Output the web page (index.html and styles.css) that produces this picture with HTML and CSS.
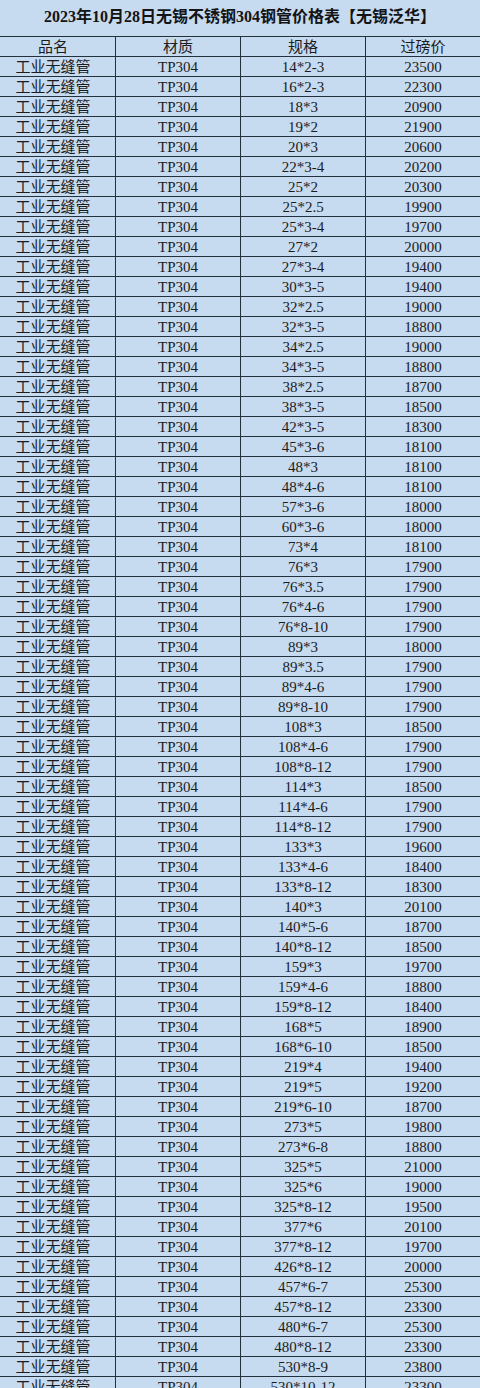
FILE: index.html
```html
<!DOCTYPE html>
<html lang="zh-CN">
<head>
<meta charset="utf-8">
<title>2023年10月28日无锡不锈钢304钢管价格表</title>
<link rel="stylesheet" href="styles.css">
</head>
<body>
<div class="sheet">
  <div class="title">2023年10月28日无锡不锈钢304钢管价格表【无锡泛华】</div>
  <div class="row head"><div class="c c1">品名</div><div class="c">材质</div><div class="c">规格</div><div class="c">过磅价</div></div>
  <div class="row"><div class="c c1">工业无缝管</div><div class="c">TP304</div><div class="c">14*2-3</div><div class="c">23500</div></div>
  <div class="row"><div class="c c1">工业无缝管</div><div class="c">TP304</div><div class="c">16*2-3</div><div class="c">22300</div></div>
  <div class="row"><div class="c c1">工业无缝管</div><div class="c">TP304</div><div class="c">18*3</div><div class="c">20900</div></div>
  <div class="row"><div class="c c1">工业无缝管</div><div class="c">TP304</div><div class="c">19*2</div><div class="c">21900</div></div>
  <div class="row"><div class="c c1">工业无缝管</div><div class="c">TP304</div><div class="c">20*3</div><div class="c">20600</div></div>
  <div class="row"><div class="c c1">工业无缝管</div><div class="c">TP304</div><div class="c">22*3-4</div><div class="c">20200</div></div>
  <div class="row"><div class="c c1">工业无缝管</div><div class="c">TP304</div><div class="c">25*2</div><div class="c">20300</div></div>
  <div class="row"><div class="c c1">工业无缝管</div><div class="c">TP304</div><div class="c">25*2.5</div><div class="c">19900</div></div>
  <div class="row"><div class="c c1">工业无缝管</div><div class="c">TP304</div><div class="c">25*3-4</div><div class="c">19700</div></div>
  <div class="row"><div class="c c1">工业无缝管</div><div class="c">TP304</div><div class="c">27*2</div><div class="c">20000</div></div>
  <div class="row"><div class="c c1">工业无缝管</div><div class="c">TP304</div><div class="c">27*3-4</div><div class="c">19400</div></div>
  <div class="row"><div class="c c1">工业无缝管</div><div class="c">TP304</div><div class="c">30*3-5</div><div class="c">19400</div></div>
  <div class="row"><div class="c c1">工业无缝管</div><div class="c">TP304</div><div class="c">32*2.5</div><div class="c">19000</div></div>
  <div class="row"><div class="c c1">工业无缝管</div><div class="c">TP304</div><div class="c">32*3-5</div><div class="c">18800</div></div>
  <div class="row"><div class="c c1">工业无缝管</div><div class="c">TP304</div><div class="c">34*2.5</div><div class="c">19000</div></div>
  <div class="row"><div class="c c1">工业无缝管</div><div class="c">TP304</div><div class="c">34*3-5</div><div class="c">18800</div></div>
  <div class="row"><div class="c c1">工业无缝管</div><div class="c">TP304</div><div class="c">38*2.5</div><div class="c">18700</div></div>
  <div class="row"><div class="c c1">工业无缝管</div><div class="c">TP304</div><div class="c">38*3-5</div><div class="c">18500</div></div>
  <div class="row"><div class="c c1">工业无缝管</div><div class="c">TP304</div><div class="c">42*3-5</div><div class="c">18300</div></div>
  <div class="row"><div class="c c1">工业无缝管</div><div class="c">TP304</div><div class="c">45*3-6</div><div class="c">18100</div></div>
  <div class="row"><div class="c c1">工业无缝管</div><div class="c">TP304</div><div class="c">48*3</div><div class="c">18100</div></div>
  <div class="row"><div class="c c1">工业无缝管</div><div class="c">TP304</div><div class="c">48*4-6</div><div class="c">18100</div></div>
  <div class="row"><div class="c c1">工业无缝管</div><div class="c">TP304</div><div class="c">57*3-6</div><div class="c">18000</div></div>
  <div class="row"><div class="c c1">工业无缝管</div><div class="c">TP304</div><div class="c">60*3-6</div><div class="c">18000</div></div>
  <div class="row"><div class="c c1">工业无缝管</div><div class="c">TP304</div><div class="c">73*4</div><div class="c">18100</div></div>
  <div class="row"><div class="c c1">工业无缝管</div><div class="c">TP304</div><div class="c">76*3</div><div class="c">17900</div></div>
  <div class="row"><div class="c c1">工业无缝管</div><div class="c">TP304</div><div class="c">76*3.5</div><div class="c">17900</div></div>
  <div class="row"><div class="c c1">工业无缝管</div><div class="c">TP304</div><div class="c">76*4-6</div><div class="c">17900</div></div>
  <div class="row"><div class="c c1">工业无缝管</div><div class="c">TP304</div><div class="c">76*8-10</div><div class="c">17900</div></div>
  <div class="row"><div class="c c1">工业无缝管</div><div class="c">TP304</div><div class="c">89*3</div><div class="c">18000</div></div>
  <div class="row"><div class="c c1">工业无缝管</div><div class="c">TP304</div><div class="c">89*3.5</div><div class="c">17900</div></div>
  <div class="row"><div class="c c1">工业无缝管</div><div class="c">TP304</div><div class="c">89*4-6</div><div class="c">17900</div></div>
  <div class="row"><div class="c c1">工业无缝管</div><div class="c">TP304</div><div class="c">89*8-10</div><div class="c">17900</div></div>
  <div class="row"><div class="c c1">工业无缝管</div><div class="c">TP304</div><div class="c">108*3</div><div class="c">18500</div></div>
  <div class="row"><div class="c c1">工业无缝管</div><div class="c">TP304</div><div class="c">108*4-6</div><div class="c">17900</div></div>
  <div class="row"><div class="c c1">工业无缝管</div><div class="c">TP304</div><div class="c">108*8-12</div><div class="c">17900</div></div>
  <div class="row"><div class="c c1">工业无缝管</div><div class="c">TP304</div><div class="c">114*3</div><div class="c">18500</div></div>
  <div class="row"><div class="c c1">工业无缝管</div><div class="c">TP304</div><div class="c">114*4-6</div><div class="c">17900</div></div>
  <div class="row"><div class="c c1">工业无缝管</div><div class="c">TP304</div><div class="c">114*8-12</div><div class="c">17900</div></div>
  <div class="row"><div class="c c1">工业无缝管</div><div class="c">TP304</div><div class="c">133*3</div><div class="c">19600</div></div>
  <div class="row"><div class="c c1">工业无缝管</div><div class="c">TP304</div><div class="c">133*4-6</div><div class="c">18400</div></div>
  <div class="row"><div class="c c1">工业无缝管</div><div class="c">TP304</div><div class="c">133*8-12</div><div class="c">18300</div></div>
  <div class="row"><div class="c c1">工业无缝管</div><div class="c">TP304</div><div class="c">140*3</div><div class="c">20100</div></div>
  <div class="row"><div class="c c1">工业无缝管</div><div class="c">TP304</div><div class="c">140*5-6</div><div class="c">18700</div></div>
  <div class="row"><div class="c c1">工业无缝管</div><div class="c">TP304</div><div class="c">140*8-12</div><div class="c">18500</div></div>
  <div class="row"><div class="c c1">工业无缝管</div><div class="c">TP304</div><div class="c">159*3</div><div class="c">19700</div></div>
  <div class="row"><div class="c c1">工业无缝管</div><div class="c">TP304</div><div class="c">159*4-6</div><div class="c">18800</div></div>
  <div class="row"><div class="c c1">工业无缝管</div><div class="c">TP304</div><div class="c">159*8-12</div><div class="c">18400</div></div>
  <div class="row"><div class="c c1">工业无缝管</div><div class="c">TP304</div><div class="c">168*5</div><div class="c">18900</div></div>
  <div class="row"><div class="c c1">工业无缝管</div><div class="c">TP304</div><div class="c">168*6-10</div><div class="c">18500</div></div>
  <div class="row"><div class="c c1">工业无缝管</div><div class="c">TP304</div><div class="c">219*4</div><div class="c">19400</div></div>
  <div class="row"><div class="c c1">工业无缝管</div><div class="c">TP304</div><div class="c">219*5</div><div class="c">19200</div></div>
  <div class="row"><div class="c c1">工业无缝管</div><div class="c">TP304</div><div class="c">219*6-10</div><div class="c">18700</div></div>
  <div class="row"><div class="c c1">工业无缝管</div><div class="c">TP304</div><div class="c">273*5</div><div class="c">19800</div></div>
  <div class="row"><div class="c c1">工业无缝管</div><div class="c">TP304</div><div class="c">273*6-8</div><div class="c">18800</div></div>
  <div class="row"><div class="c c1">工业无缝管</div><div class="c">TP304</div><div class="c">325*5</div><div class="c">21000</div></div>
  <div class="row"><div class="c c1">工业无缝管</div><div class="c">TP304</div><div class="c">325*6</div><div class="c">19000</div></div>
  <div class="row"><div class="c c1">工业无缝管</div><div class="c">TP304</div><div class="c">325*8-12</div><div class="c">19500</div></div>
  <div class="row"><div class="c c1">工业无缝管</div><div class="c">TP304</div><div class="c">377*6</div><div class="c">20100</div></div>
  <div class="row"><div class="c c1">工业无缝管</div><div class="c">TP304</div><div class="c">377*8-12</div><div class="c">19700</div></div>
  <div class="row"><div class="c c1">工业无缝管</div><div class="c">TP304</div><div class="c">426*8-12</div><div class="c">20000</div></div>
  <div class="row"><div class="c c1">工业无缝管</div><div class="c">TP304</div><div class="c">457*6-7</div><div class="c">25300</div></div>
  <div class="row"><div class="c c1">工业无缝管</div><div class="c">TP304</div><div class="c">457*8-12</div><div class="c">23300</div></div>
  <div class="row"><div class="c c1">工业无缝管</div><div class="c">TP304</div><div class="c">480*6-7</div><div class="c">25300</div></div>
  <div class="row"><div class="c c1">工业无缝管</div><div class="c">TP304</div><div class="c">480*8-12</div><div class="c">23300</div></div>
  <div class="row"><div class="c c1">工业无缝管</div><div class="c">TP304</div><div class="c">530*8-9</div><div class="c">23800</div></div>
  <div class="row"><div class="c c1">工业无缝管</div><div class="c">TP304</div><div class="c">530*10-12</div><div class="c">23300</div></div>
</div>
</body>
</html>
```

FILE: styles.css
```css
html, body {
  margin: 0;
  padding: 0;
  background: #c6daf0;
}

.sheet {
  width: 480px;
  font-family: "Liberation Serif", "Noto Sans CJK SC", serif;
  font-size: 15px;
  color: #1c1c1c;
  background: #c6daf0;
}

.title {
  height: 37px;
  box-sizing: border-box;
  border-bottom: 1px solid #23303e;
  font-size: 16px;
  font-weight: bold;
  line-height: 33px;
  text-align: center;
  color: #141414;
}

.row {
  display: grid;
  grid-template-columns: 115px 125px 125px 115px;
  height: 20px;
  box-sizing: border-box;
  border-bottom: 1px solid #23303e;
}

.c {
  line-height: 20px;
  text-align: center;
  white-space: nowrap;
  border-left: 1px solid #23303e;
}

.c1 {
  border-left: none;
  padding-right: 9px;
}
```
